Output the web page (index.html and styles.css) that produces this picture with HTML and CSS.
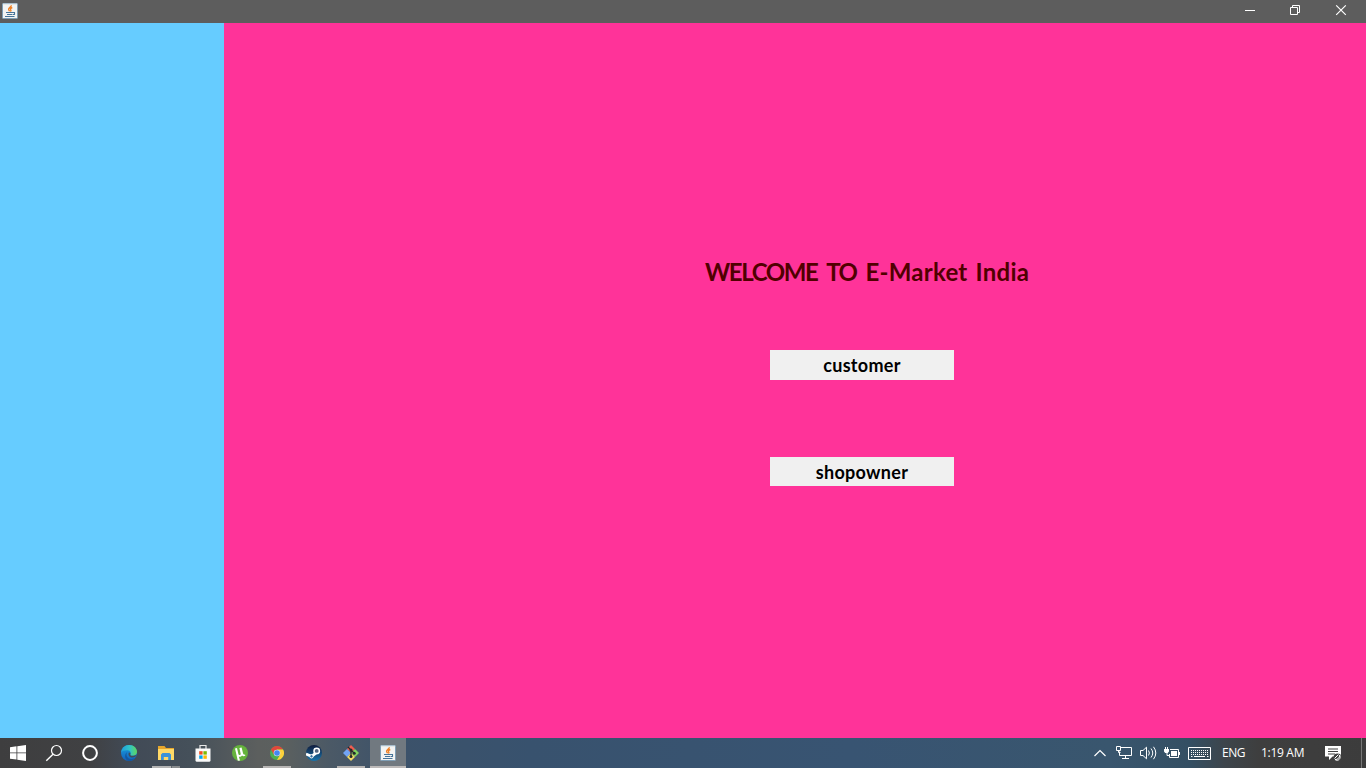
FILE: index.html
```html
<!DOCTYPE html>
<html lang="en">
<head>
<meta charset="utf-8">
<title>E-Market India</title>
<link rel="stylesheet" href="styles.css">
</head>
<body>
<svg width="0" height="0" class="defs">
  <defs>
    <linearGradient id="edgeBlue" x1="0" y1="0" x2="0" y2="1"><stop offset="0" stop-color="#1a9fdc"/><stop offset="1" stop-color="#1262bd"/></linearGradient>
    <linearGradient id="edgeTop" x1="0" y1="0" x2="1" y2="0"><stop offset="0" stop-color="#1f9cde"/><stop offset=".55" stop-color="#30c5c5"/><stop offset="1" stop-color="#62d65a"/></linearGradient>
    <linearGradient id="steam" x1="0" y1="0" x2="0" y2="1"><stop offset="0" stop-color="#101b3c"/><stop offset="1" stop-color="#1874ac"/></linearGradient>
    <symbol id="java" viewBox="0 0 16 16">
      <rect x=".5" y=".5" width="15" height="15" rx=".7" fill="#f3f4f3" stroke="#7f9eb5"/>
      <path d="M1 1h14" stroke="#d3dde2"/>
      <path d="M9.2 2.3c.5 1.800-3 2.400-2.600 4.200.1.700.8 1.100 1 1.800M10.300 4.500c-1.500.6-2.500 1.400-1.600 2.400.5.600.2 1.100-.4 1.500" fill="none" stroke="#ef8227" stroke-width="1.400"/>
      <path d="M4 9.500h7M5 11.500h5.500M3 13.500h9.500M11 9.500h1.500v2H11" fill="none" stroke="#47759a" stroke-width="1.100"/>
    </symbol>
  </defs>
</svg>
<div class="screen">
  <header class="titlebar">
    <svg class="app-icon" width="16" height="16"><use href="#java"/></svg>
    <div class="controls">
      <svg width="46" height="21" viewBox="0 0 46 21"><path d="M19 10.500h10" stroke="#fff"/></svg>
      <svg width="46" height="21" viewBox="0 0 46 21" fill="none" stroke="#fff"><path d="M18.500 7.500h7v7h-7zM20.500 7.500v-2h7v7h-2"/></svg>
      <svg width="46" height="21" viewBox="0 0 46 21"><path d="M18.200 5.300l9.600 9.600M27.800 5.300l-9.600 9.600" stroke="#fff" stroke-width="1.200"/></svg>
    </div>
  </header>
  <main class="content">
    <aside class="side"></aside>
    <section class="panel">
      <h1 class="welcome"><span class="greeting">WELCOME TO</span> <span class="brand">E-Market India</span></h1>
      <button class="choice choice-customer">customer</button>
      <button class="choice choice-owner">shopowner</button>
    </section>
  </main>
  <footer class="taskbar">
    <div class="system">
      <span class="slot"><svg width="16" height="16" viewBox="0 0 16 16" fill="#fff"><path d="M0 2.200l6.500-.9v6.200H0zM7.300 1.200L16 0v7.500H7.300zM0 8.300h6.500v6.300L0 13.700zM7.300 8.300H16V16l-8.700-1.300z"/></svg></span>
      <span class="slot"><svg width="18" height="18" viewBox="0 0 18 18" fill="none" stroke="#fff"><circle cx="11.500" cy="6.500" r="5" stroke-width="1.200"/><path d="M8 10.200L1.300 16.800" stroke-width="1.400"/></svg></span>
      <span class="slot"><svg width="18" height="18" viewBox="0 0 18 18" fill="none" stroke="#fff"><circle cx="9" cy="9" r="6.900" stroke-width="2"/></svg></span>
    </div>
    <div class="apps">
      <span class="slot"><svg width="16" height="16" viewBox="0 0 16 16"><circle cx="8" cy="8" r="8" fill="url(#edgeBlue)"/><path d="M.1 7.500C.6 3 4 0 8.200 0 13 0 16 3.400 16 6.700c0 2.600-2 4-4.200 4-2 0-2.800-.7-2.500-1.300 1-1 .7-4-2.800-4.200C3.600 5.100 1.100 6 .1 7.500z" fill="url(#edgeTop)"/><path d="M6.500 6.700c-2.300 2.800-.5 7 3.400 7.300 2 .1 3.500-.6 4.900-1.700C13.300 14.600 11 16 8.300 16 3.700 15.600 2.600 9.300 6.500 6.700z" fill="#1457a0"/><path d="M9.300 9.400c-.3.600.5 1.300 2.500 1.300 1.400 0 2.400-.4 3.900-1-.4 1.700-2.400 2.700-4.500 2.700-3 0-4.500-2.700-3.300-5 1.700.3 1.800 1.500 1.400 2z" fill="#434c58"/></svg></span>
      <span class="slot split"><svg width="16" height="14" viewBox="0 0 16 14"><path d="M0 0h6.500l1.500 2h8v12H0z" fill="#e6a62c"/><path d="M0 3h16v11H0z" fill="#ffd967"/><path d="M3 14V8.500L4.500 7h7L13 8.500V14h-2.800v-3H5.800v3z" fill="#3c93d8"/></svg></span>
      <span class="slot"><svg class="store" width="16" height="18" viewBox="0 0 16 18"><path d="M5 5V1.500h6V5" fill="none" stroke="#e9e9e9" stroke-width="1.200"/><path d="M.5 4.500h15V17l-1 .7h-13l-1-.7z" fill="#fafafa"/><path d="M4.200 7.200h3.400v3.400H4.200z" fill="#f14f21"/><path d="M8.400 7.200h3.400v3.400H8.400z" fill="#7eb900"/><path d="M4.200 11.400h3.400v3.400H4.200z" fill="#00a3ee"/><path d="M8.400 11.400h3.400v3.400H8.400z" fill="#feb800"/></svg></span>
      <span class="slot"><svg width="16" height="16" viewBox="0 0 16 16"><circle cx="8" cy="8" r="8" fill="#65b33c"/><path d="M3 3.500l2-.5 1.400 6c.4 1.700 2.700 1.300 2.200-.4L7.400 3l2.200-.4 1.500 6c.3 1 .8 1.300 2 1l.2 1.200c-1.400.6-2.500.5-3.200-.3-.8 1.200-2.200 1.600-3.200 1.200L8 15.600l-2.200.2z" fill="#fff"/></svg></span>
      <span class="slot running"><svg width="14" height="14" viewBox="0 0 16 16"><circle cx="8" cy="8" r="8" fill="#4caf50"/><path d="M1.070 4A8 8 0 0 1 14.930 4H8L4.540 10z" fill="#e0473c"/><path d="M14.930 4A8 8 0 0 1 8 16L11.460 10 8 4z" fill="#fdd03b"/><circle cx="8" cy="8" r="3.800" fill="#e5e9ee"/><circle cx="8" cy="8" r="3.200" fill="#4387f2"/></svg></span>
      <span class="slot"><svg width="16" height="16" viewBox="0 0 16 16"><circle cx="8" cy="8" r="8" fill="url(#steam)"/><path d="M0 9l5.500 2.300L10 8" fill="none" stroke="#fff" stroke-width="2.800"/><circle cx="10.700" cy="5.900" r="2.700" fill="#52657f" stroke="#fff" stroke-width="1.500"/><circle cx="5.500" cy="11.300" r="1.700" fill="#3a6e9b" stroke="#fff"/></svg></span>
      <span class="slot running"><svg width="18" height="18" viewBox="0 0 18 18"><path d="M9 1l4 4-4 4-4-4z" fill="#ef5d50"/><path d="M13 5l4 4-4 4-4-4z" fill="#82d35e"/><path d="M5 5l4 4-4 4-4-4z" fill="#72a4f5"/><path d="M9 9l4 4-4 4-4-4z" fill="#f4dc64"/><path d="M6 3l3 3v7M9 6l3.200 3.200" fill="none" stroke="#252a2d" stroke-width="1.300"/><g fill="#252a2d"><circle cx="9" cy="6" r="1.500"/><circle cx="12.200" cy="9.300" r="1.500"/><circle cx="9" cy="12.500" r="1.500"/></g></svg></span>
      <span class="slot active"><svg width="16" height="16"><use href="#java"/></svg></span>
    </div>
    <div class="tray">
      <svg width="12" height="8" viewBox="0 0 12 8" fill="none" stroke="#fff" stroke-width="1.200"><path d="M.5 7L6 1.500 11.500 7"/></svg>
      <svg width="17" height="16" viewBox="0 0 17 16" fill="none" stroke="#fff"><path d="M5 2.500h10.500v8h-12v-4M9.500 10.500v3M6 13.500h7M.5 1.500h4v4h-4zM2.500 5.500v2h2"/></svg>
      <svg width="17" height="16" viewBox="0 0 17 16" fill="none" stroke="#fff"><path d="M.5 5.500h2.500l3.500-3.300v11.600L3 10.500H.5zM8.500 5.500q1.800 2.500 0 5M11 3.500q3.500 4.500 0 9M13.500 1.800q4.600 6.200 0 12.400"/></svg>
      <svg width="17" height="16" viewBox="0 0 17 16" fill="none" stroke="#fff"><path d="M1.500 2v2M3.500 2v2M3 8v2.500h3M6 4.500h8.500v8h-9V9M15.500 7v3"/><path d="M0 4h5v2.500L3.800 8H1.200L0 6.500zM7 6h6v5H7z" fill="#fff" stroke="none"/></svg>
      <svg class="keyboard" width="23" height="13" viewBox="0 0 23 13" fill="none" stroke="#fff"><path d="M.5 .5h22v12H.5z"/><path d="M3 3.500h18M3 5.500h18M3 7.500h18" stroke-dasharray="1 1"/><path d="M3 9.500h1.500M6 9.500h11M19 9.500h1.500"/></svg>
      <span class="language">ENG</span>
      <span class="clock">1:19 AM</span>
      <svg class="notice" width="17" height="17" viewBox="0 0 17 17"><path d="M0 1h16v10.500H7.500L4 15v-3.500H0z" fill="#fff"/><path d="M3 4h10M3 6.500h10M3 9h7" stroke="#404040"/><circle cx="12.500" cy="12.500" r="4" fill="#404040"/><path d="M10 14.500c3 2.300 6.400-.9 4.700-4.400 0 2.700-1.900 4.600-4.700 4.400zM9.500 13.500l4-4" fill="none" stroke="#fff"/></svg>
      <span class="desktop-edge"></span>
    </div>
  </footer>
</div>
</body>
</html>
```

FILE: styles.css
```css
* { box-sizing: border-box; }
body { margin: 0; overflow: hidden; }
.defs { position: absolute; }
.screen { width: 1366px; height: 768px; display: grid; grid-template-rows: 23px 715px 30px; }
svg { display: block; flex: none; }
.titlebar { background: #5d5d5d; display: flex; justify-content: space-between; align-items: flex-start; }
.app-icon { margin: 3px 0 0 2px; }
.controls { display: flex; margin-right: 2px; }
.content { display: grid; grid-template-columns: 224px 1fr; }
.side { background: #66ccff; }
.panel { background: #ff3399; display: flex; flex-direction: column; align-items: flex-start; }
.welcome { margin: 234px 0 0 481px; height: 30px; font: 700 24px/30px Lato, sans-serif; color: #500000; white-space: nowrap; }
.greeting { letter-spacing: -1.4px; word-spacing: 5px; }
.brand { margin-left: 3px; letter-spacing: 0.25px; word-spacing: 2px; }
.choice { margin-left: 546px; width: 184px; border: 0; padding: 1px 0 0; background: #f0f0f0; color: #000; font: 700 18px/29px Lato, sans-serif; letter-spacing: 0.3px; }
.choice-customer { height: 30px; margin-top: 63px; }
.choice-owner { height: 29px; margin-top: 77px; line-height: 28px; }
.taskbar { display: flex; background: linear-gradient(90deg, #3e3e3f 0, #404143 90px, #414a56 130px, #45505a 190px, #5c5f5e 258px, #5b605f 285px, #4b5966 330px, #3c526a 400px, #38526e 530px, #385472 850px, #39566e 1110px, #344f63 1190px, #3d454b 1225px, #3e3e3e 1260px, #3c3c3c 100%); }
.system { display: flex; }
.apps { display: flex; gap: 1px; margin-left: 3px; }
.slot { width: 36px; height: 30px; display: flex; align-items: center; justify-content: center; }
.store { margin-right: 1px; }
.running { background: linear-gradient(#b7b5b4, #b7b5b4) 4px 28px / 28px 2px no-repeat; }
.split { background: linear-gradient(90deg, #b3b3b3 19px, #626970 19px, #626970 20px, #898c8e 20px) 4px 28px / 28px 2px no-repeat; }
.active { background: linear-gradient(#bdbab9, #bdbab9) 0 28px / 36px 2px no-repeat, #717980; }
.tray { display: flex; align-items: center; margin-left: auto; color: #fff; font: 12px/30px "Open Sans", "Noto Sans", sans-serif; }
.tray svg { margin-right: 7px; }
.tray svg:first-child { margin-right: 10px; }
.tray .keyboard { margin-right: 11px; }
.language { width: 39px; letter-spacing: -0.45px; }
.clock { width: 64px; letter-spacing: -0.3px; white-space: nowrap; }
.tray .notice { margin-right: 19px; }
.desktop-edge { width: 1px; height: 30px; background: #777; margin-right: 4px; }
```
